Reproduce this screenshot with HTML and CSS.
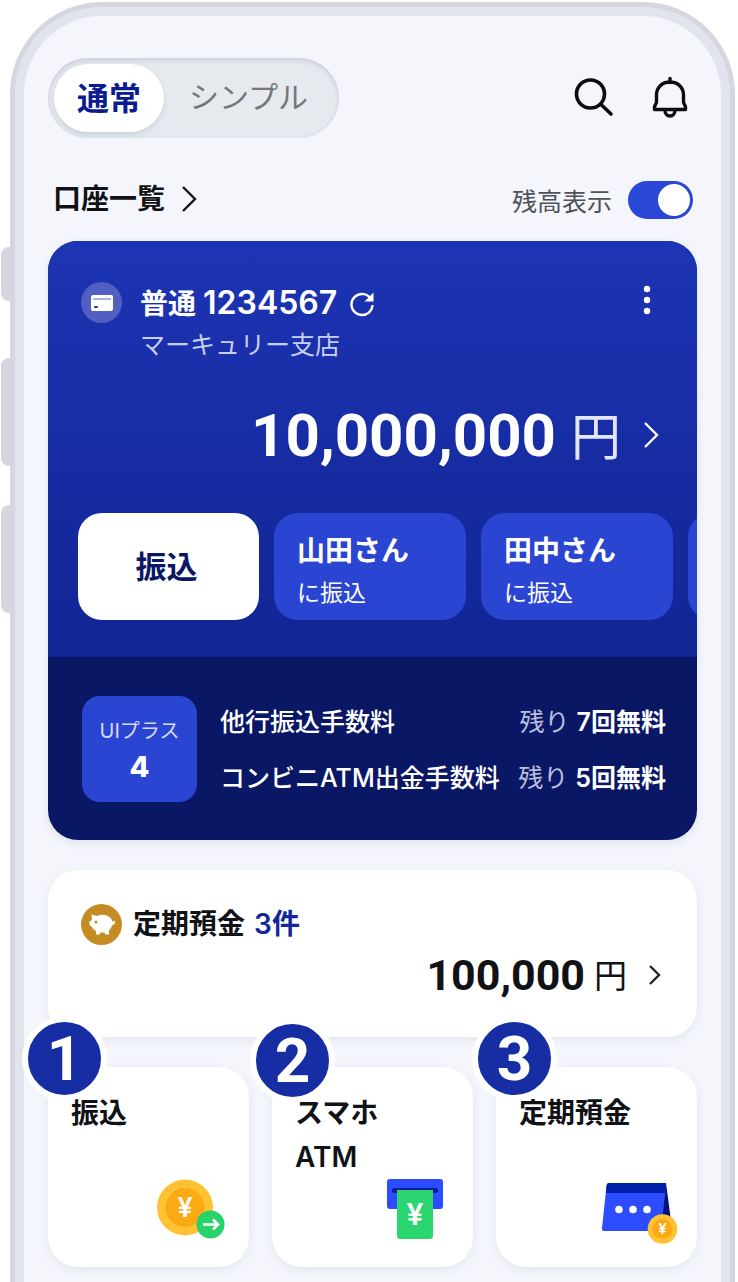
FILE: index.html
```html
<!DOCTYPE html>
<html lang="ja">
<head>
<meta charset="utf-8">
<meta name="viewport" content="width=device-width, initial-scale=1">
<title>口座一覧</title>
<link rel="stylesheet" href="styles.css">
</head>
<body>
<div class="phone">
  <span class="side-key key-mute"></span>
  <span class="side-key key-up"></span>
  <span class="side-key key-down"></span>
  <div class="bezel">
    <main class="screen">
      <header class="topbar">
        <div class="segment">
          <button class="segment-item is-active" type="button" aria-pressed="true">通常</button>
          <button class="segment-item" type="button" aria-pressed="false">シンプル</button>
        </div>
        <div class="tools">
          <button class="tool" type="button" aria-label="検索">
            <svg width="42" height="42" viewBox="0 0 42 42" fill="none" stroke="#0c0d10" stroke-width="3.6" stroke-linecap="round"><circle cx="16.500" cy="17" r="14"/><path d="M27 27.500L37 37"/></svg>
          </button>
          <button class="tool" type="button" aria-label="お知らせ">
            <svg width="36" height="42" viewBox="0 0 36 42" fill="none" stroke="#0c0d10" stroke-width="3.400" stroke-linecap="round" stroke-linejoin="round"><path d="M18 1.500v4M18 5c-8 0-13.500 5.500-13.500 13v7c0 2-2 3-2 5.500V32.500h31V30.500c0-2.500-2-3.500-2-5.500v-7c0-7.500-5.500-13-13.500-13zM13 33.500c0 3 2 5.500 5 5.500s5-2.500 5-5.500"/></svg>
          </button>
        </div>
      </header>

      <div class="list-head">
        <a class="list-link" href="#accounts">口座一覧
          <svg width="16" height="28" viewBox="0 0 16 28" fill="none" stroke="#111216" stroke-width="2.400"><path d="M2 2l12 12L2 26"/></svg>
        </a>
        <label class="balance-toggle">残高表示<input type="checkbox" class="switch" checked></label>
      </div>

      <section class="account" id="accounts">
        <div class="account-main">
          <div class="account-head">
            <span class="card-icon">
              <svg width="24" height="18" viewBox="0 0 24 18"><rect x="1" y="1" width="22" height="16" rx="2" fill="#fff"/><path d="M3 5h18" stroke="#a9b1e0" stroke-width="2"/><rect x="4" y="12" width="4" height="2" rx="1" fill="#1b31b0"/></svg>
            </span>
            <div class="account-name">
              <h2 class="account-title"><span>普通 <span class="account-number">1234567</span></span>
                <button class="plain" type="button" aria-label="更新"><svg width="26" height="26" viewBox="0 0 26 26" fill="none" stroke="#fff" stroke-width="2.400"><path d="M22.500 9A10.500 10.500 0 1 0 23.500 14"/><path d="M24.500 1.500v9h-9z" fill="#fff" stroke="none"/></svg></button>
              </h2>
              <p class="branch">マーキュリー支店</p>
            </div>
            <button class="plain" type="button" aria-label="メニュー"><svg width="8" height="36" viewBox="0 0 8 36" fill="#fff"><circle cx="4" cy="7" r="3.200"/><circle cx="4" cy="18" r="3.200"/><circle cx="4" cy="29" r="3.200"/></svg></button>
          </div>
          <a class="amount amount-large" href="#detail"><strong>10,000,000</strong><span class="yen">円</span>
            <svg width="16" height="28" viewBox="0 0 16 28" fill="none" stroke="#fff" stroke-width="2.400"><path d="M2 2l12 12L2 26"/></svg>
          </a>
          <div class="actions">
            <button class="action action-primary" type="button">振込</button>
            <button class="action" type="button"><b>山田さん</b><span>に振込</span></button>
            <button class="action" type="button"><b>田中さん</b><span>に振込</span></button>
            <button class="action" type="button" aria-label="次の振込先"></button>
          </div>
        </div>
        <div class="fees">
          <div class="rank"><span>UIプラス</span><b>4</b></div>
          <dl class="fee-list">
            <div class="fee"><dt>他行振込手数料</dt><dd>残り <b>7回無料</b></dd></div>
            <div class="fee"><dt>コンビニATM出金手数料</dt><dd>残り <b>5回無料</b></dd></div>
          </dl>
        </div>
      </section>

      <section class="deposit">
        <h2 class="deposit-title">
          <svg width="41" height="41" viewBox="0 0 41 41"><circle cx="20.500" cy="20.500" r="20.500" fill="#c68c24"/><path d="M10.500 10.500l5.500 1.500c3-1.800 10-2 13 1.500 1.500 1.500 2.200 2.800 2.500 4.200l2.500-1.200c.5 3-1 4.500-2.800 4.700-.7 2.300-1.900 4-3.200 5.300V30.500h-3.500l-1-2h-4l-1 2h-3.500V27c-1.800-.8-3-2.200-3.800-3.800L8.500 21v-3.500l2.500-1.500z" fill="#fff"/><circle cx="15" cy="18" r="1.500" fill="#c68c24"/></svg>
          <span>定期預金 <em>3件</em></span>
        </h2>
        <a class="amount amount-small" href="#deposit"><strong>100,000</strong><span class="yen">円</span>
          <svg width="12" height="22" viewBox="0 0 12 22" fill="none" stroke="#222329" stroke-width="2.400"><path d="M1 2l9 9-9 9"/></svg>
        </a>
      </section>

      <nav class="services">
        <a class="service" href="#transfer">
          <span class="marker marker-1">1</span>
          <span>振込</span>
          <svg class="art" width="96" height="68" viewBox="0 0 96 68"><circle cx="48" cy="30.500" r="28" fill="#ffc233"/><circle cx="48" cy="30.500" r="19.500" fill="#fbaa15"/><text class="coin-mark" x="48" y="40" font-size="27">¥</text><circle cx="73.500" cy="47.500" r="14" fill="#29d36c"/><path d="M66 47.500h14M76 42.500l5 5-5 5" fill="none" stroke="#fff" stroke-width="2.600"/></svg>
        </a>
        <a class="service" href="#atm">
          <span class="marker marker-2">2</span>
          <span>スマホ<br>ATM</span>
          <svg class="art" width="96" height="68" viewBox="0 0 96 68"><rect x="26" y="2" width="56" height="30" rx="3" fill="#2b4dff"/><rect x="31" y="11" width="46" height="5" rx="2.500" fill="#061c96"/><path d="M36 13h36v46a3 3 0 0 1-3 3H39a3 3 0 0 1-3-3z" fill="#2bd670"/><text class="coin-mark" x="54" y="48" font-size="30">¥</text></svg>
        </a>
        <a class="service" href="#time-deposit">
          <span class="marker marker-3">3</span>
          <span>定期預金</span>
          <svg class="art" width="96" height="68" viewBox="0 0 96 68"><path d="M78 6h3l5 38-9 6z" fill="#02146f"/><path d="M24 6h54q3 0 3 3l-5 45H19q-2.500 0-2-3l4.500-42q.5-3 2.500-3z" fill="#2b4dff"/><path d="M24 6h54q3 0 3 3l-1 7H21l.5-7q.5-3 2.500-3z" fill="#001fa8"/><g fill="#fff"><circle cx="34" cy="32.500" r="3.800"/><circle cx="48" cy="32.500" r="3.800"/><circle cx="62" cy="32.500" r="3.800"/></g><circle cx="77.500" cy="52" r="14.800" fill="#ffc233"/><circle cx="77.500" cy="52" r="10" fill="#fbaa15"/><text class="coin-mark" x="77.500" y="57" font-size="15">¥</text></svg>
        </a>
      </nav>
    </main>
  </div>
</div>
</body>
</html>
```

FILE: styles.css
```css
* { box-sizing: border-box; }
body {
  margin: 0;
  padding: 2px 3px 0 10px;
  background: #fff;
  color: #111216;
  font-family: Inter, "Noto Sans CJK JP", sans-serif;
}
h2, p, dl, dd { margin: 0; }
a { color: inherit; text-decoration: none; }
button { font: inherit; color: inherit; border: 0; padding: 0; background: none; cursor: pointer; }
svg { display: block; flex: none; }

.phone {
  position: relative;
  border: 5px solid #d5d6df;
  border-bottom: 0;
  border-radius: 92px 92px 0 0;
  background: #e2e4ed;
}
.bezel {
  border: 9px solid #e2e4ed;
  border-bottom: 0;
  border-radius: 87px 87px 0 0;
}
.screen {
  padding: 42px 24px 15px;
  border-radius: 78px 78px 0 0;
  background: #f4f6fc;
}
.side-key {
  position: absolute;
  left: -14px;
  width: 10px;
  border-radius: 8px 0 0 8px;
  background: #d5d6df;
}
.key-mute { top: 240px; height: 54px; }
.key-up { top: 351px; height: 108px; }
.key-down { top: 498px; height: 108px; }

.topbar { display: flex; justify-content: space-between; align-items: center; }
.segment {
  display: flex;
  padding: 6px;
  border-radius: 40px;
  background: #e6eaee;
  box-shadow: inset 0 3px 5px #cfd1dc, inset 0 0 3px #d5d7e2;
}
.segment-item {
  height: 68px;
  padding: 0 25px 6px;
  border-radius: 34px;
  font-size: 30px;
  color: #75777c;
}
.segment-item.is-active {
  padding: 0 23px 4px;
  font-size: 32px;
  font-weight: 700;
  color: #0a1c90;
  background: #fff;
  box-shadow: 0 3px 5px #cdd0dc;
}
.tools { display: flex; gap: 36px; padding-right: 9px; }

.list-head {
  display: flex;
  justify-content: space-between;
  align-items: center;
  height: 38px;
  margin: 43px 4px 22px 5px;
}
.list-link { display: flex; align-items: center; gap: 16px; font-size: 28px; font-weight: 600; line-height: 36px; padding-bottom: 2px; }
.balance-toggle { display: flex; align-items: center; gap: 16px; font-size: 25px; color: #505258; }
.switch {
  appearance: none;
  display: grid;
  align-items: center;
  justify-items: end;
  width: 65px;
  height: 38px;
  margin: 0;
  padding: 3px;
  border-radius: 19px;
  background: #2a47d6;
}
.switch::before { content: ""; width: 32px; height: 32px; border-radius: 50%; background: #fff; }

.account {
  overflow: hidden;
  border-radius: 30px;
  color: #fff;
  background: #0a1765;
  box-shadow: 0 3px 8px #dfe2ec;
}
.account-main { padding: 41px 0 37px; background: linear-gradient(#1d34b4, #112594); }
.account-head { display: flex; align-items: flex-start; padding: 0 46px 0 33px; }
.card-icon {
  display: grid;
  place-items: center;
  width: 41px;
  height: 41px;
  border-radius: 50%;
  background: #505fc1;
}
.account-name { flex: 1; padding-left: 18px; }
.account-title {
  display: flex;
  align-items: center;
  gap: 12px;
  font-size: 28px;
  font-weight: 600;
  line-height: 42px;
}
.account-number { font-size: 32px; }
.branch { margin-top: 2px; font-size: 25px; line-height: 36px; color: #c9cff0; }

.amount { display: flex; align-items: center; justify-content: flex-end; }
.amount strong { font-family: Roboto, sans-serif; font-weight: 700; }
.amount-large { height: 72px; margin: 36px 38px 42px 0; }
.amount-large strong { font-size: 60px; }
.amount-large .yen { margin: 0 22px 4px 15px; font-size: 50px; color: #e2e5f8; }

.actions { display: flex; gap: 15px; overflow: hidden; padding-left: 30px; }
.action {
  display: flex;
  flex: none;
  flex-direction: column;
  justify-content: center;
  width: 192px;
  height: 107px;
  padding: 4px 0 0 23px;
  border-radius: 24px;
  background: #2b45d3;
  font-size: 23px;
  line-height: 36px;
  text-align: left;
}
.action b { font-size: 28px; font-weight: 600; line-height: 48px; }
.action-primary {
  align-items: center;
  width: 181px;
  padding: 0 4px 0 0;
  color: #0a1765;
  background: #fff;
  font-size: 31px;
  font-weight: 600;
}

.fees { display: flex; align-items: center; gap: 23px; padding: 39px 31px 38px 34px; }
.rank {
  display: flex;
  flex: none;
  flex-direction: column;
  align-items: center;
  justify-content: center;
  width: 115px;
  height: 106px;
  border-radius: 18px;
  background: #2b45d3;
  color: #d5daf8;
  font-size: 20px;
  line-height: 36px;
}
.rank b { color: #fff; font-size: 29px; font-weight: 800; }
.fee-list { flex: 1; display: grid; gap: 20px; padding-top: 1px; }
.fee { display: flex; justify-content: space-between; line-height: 36px; font-size: 25px; white-space: nowrap; }
.fee dt { font-weight: 500; }
.fee b { font-weight: 600; }
.fee dd { color: #b9bedb; }
.fee b { color: #fff; }

.deposit {
  margin: 30px 0;
  padding: 34px 36px 32px 33px;
  border-radius: 30px;
  background: #fff;
  box-shadow: 0 3px 10px #e3e6ee;
}
.deposit-title { display: flex; align-items: center; gap: 11px; font-size: 28px; font-weight: 600; line-height: 41px; }
.deposit-title em { margin-left: 2px; font-style: normal; color: #13269b; }
.amount-small { height: 60px; }
.amount-small strong { font-size: 43px; }
.amount-small .yen { margin: 0 22px 2px 9px; font-size: 33px; }

.services { display: grid; grid-template-columns: repeat(3, 1fr); gap: 23px; }
.service {
  position: relative;
  display: flex;
  flex-direction: column;
  justify-content: space-between;
  height: 200px;
  padding: 24px 16px 22px 23px;
  border-radius: 30px;
  background: #fff;
  box-shadow: 0 3px 10px #e3e6ee;
  font-size: 28px;
  font-weight: 600;
  line-height: 44px;
}
.art { position: absolute; right: 16px; bottom: 22px; }
.coin-mark { fill: #fff; font-family: Inter, sans-serif; font-weight: 600; text-anchor: middle; }
.marker {
  position: absolute;
  top: -51px;
  left: -26px;
  display: grid;
  place-items: center;
  width: 85px;
  height: 85px;
  border: 6px solid #fff;
  border-radius: 50%;
  background: #162da3;
  color: #fff;
  font-family: Roboto, sans-serif;
  font-size: 62px;
  font-weight: 700;
}
.marker-2 { top: -49px; left: -22px; }
.marker-3 { left: -24px; }
```
